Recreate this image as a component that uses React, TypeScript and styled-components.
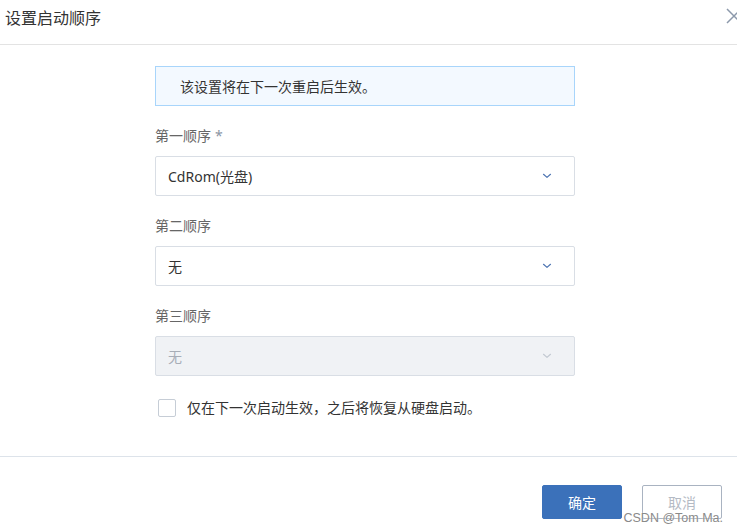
import React from "react";
import styled, { createGlobalStyle } from "styled-components";

const GlobalStyle = createGlobalStyle`
  html, body {
    margin: 0;
    padding: 0;
    background: #ffffff;
    overflow: hidden;
  }
  body {
    font-family: "Noto Sans", "Noto Sans CJK SC", sans-serif;
    color: #333333;
  }
`;

type Option = { label: string; value: string; required?: boolean; disabled?: boolean };

const orders: Option[] = [
  { label: "第一顺序", value: "CdRom(光盘)", required: true },
  { label: "第二顺序", value: "无" },
  { label: "第三顺序", value: "无", disabled: true },
];

const Chevron: React.FC<{ disabled?: boolean }> = ({ disabled }) => (
  <svg width="10" height="6" viewBox="0 0 10 6" fill="none">
    <path
      d="M1.5 1.3 L5 4.4 L8.5 1.3"
      stroke={disabled ? "#c3c9d2" : "#4d74b2"}
      strokeWidth="1.2"
      strokeLinecap="round"
      strokeLinejoin="round"
    />
  </svg>
);

export default function App() {
  return (
    <>
      <GlobalStyle />
      <Dialog>
        <Header>
          <Title>设置启动顺序</Title>
          <CloseIcon width="11" height="16" viewBox="0 0 11 16" fill="none">
            <path d="M1 1 L15 15 M1 15 L15 1" stroke="#8c99ab" strokeWidth="1.5" />
          </CloseIcon>
        </Header>

        <Body>
          <Form>
            <Notice>该设置将在下一次重启后生效。</Notice>

            {orders.map((o) => (
              <Field key={o.label}>
                <Label>
                  {o.label}
                  {o.required && <Star>*</Star>}
                </Label>
                <Select disabled={o.disabled}>
                  <SelectValue disabled={o.disabled}>{o.value}</SelectValue>
                  <Chevron disabled={o.disabled} />
                </Select>
              </Field>
            ))}

            <CheckRow>
              <CheckBox />
              <CheckText>仅在下一次启动生效，之后将恢复从硬盘启动。</CheckText>
            </CheckRow>
          </Form>
        </Body>

        <Footer>
          <Button primary>确定</Button>
          <Button>取消</Button>
        </Footer>

        <Watermark>CSDN @Tom Ma.</Watermark>
      </Dialog>
    </>
  );
}

const Dialog = styled.div`
  position: relative;
  width: 737px;
  height: 532px;
  background: #ffffff;
`;

const Header = styled.div`
  height: 44px;
  border-bottom: 1px solid #e3e3e3;
  display: flex;
  align-items: center;
  justify-content: space-between;
  padding-left: 5px;
  box-sizing: content-box;
`;

const Title = styled.h2`
  margin: 0 0 8px;
  font-size: 16px;
  font-weight: 400;
  color: #333333;
  line-height: 20px;
`;

const CloseIcon = styled.svg`
  align-self: flex-start;
  margin-top: 8px;
`;

const Body = styled.div`
  padding: 21px 0 39px 155px;
`;

const Form = styled.div`
  width: 420px;
  display: flex;
  flex-direction: column;
`;

const Notice = styled.div`
  height: 40px;
  box-sizing: border-box;
  border: 1px solid #a8d5fb;
  background: #f3f9ff;
  padding-left: 24px;
  display: flex;
  align-items: center;
  font-size: 14px;
  color: #333333;
`;

const Field = styled.div`
  display: flex;
  flex-direction: column;
`;

const Label = styled.div`
  margin: 20px 0 10px;
  line-height: 20px;
  font-size: 14px;
  color: #666666;
`;

const Star = styled.span`
  margin-left: 4px;
  color: #8a94a3;
`;

const Select = styled.div<{ disabled?: boolean }>`
  height: 40px;
  box-sizing: border-box;
  border: 1px solid #d9dee5;
  border-radius: 2px;
  background: ${({ disabled }) => (disabled ? "#f0f2f5" : "#ffffff")};
  display: flex;
  align-items: center;
  justify-content: space-between;
  padding: 0 22px 0 12px;
`;

const SelectValue = styled.span<{ disabled?: boolean }>`
  font-size: 14px;
  color: ${({ disabled }) => (disabled ? "#a7adb7" : "#333333")};
`;

const CheckRow = styled.div`
  display: flex;
  align-items: center;
  margin-top: 23px;
  padding-left: 3px;
  gap: 11px;
`;

const CheckBox = styled.span`
  width: 18px;
  height: 18px;
  box-sizing: border-box;
  border: 1px solid #c6cdd6;
  border-radius: 2px;
  background: #ffffff;
`;

const CheckText = styled.span`
  font-size: 14px;
  color: #333333;
  line-height: 18px;
`;

const Footer = styled.div`
  border-top: 1px solid #dde3ea;
  display: flex;
  justify-content: flex-end;
  gap: 20px;
  padding: 28px 15px 0 0;
`;

const Button = styled.button<{ primary?: boolean }>`
  width: 80px;
  height: 34px;
  border-radius: 2px;
  font-family: inherit;
  font-size: 14px;
  cursor: pointer;
  border: 1px solid ${({ primary }) => (primary ? "#3b71ba" : "#a9b3c1")};
  background: ${({ primary }) => (primary ? "#3b71ba" : "#ffffff")};
  color: ${({ primary }) => (primary ? "#ffffff" : "#b4bac4")};
`;

const Watermark = styled.div`
  position: absolute;
  right: 14px;
  bottom: 7px;
  font-family: "Liberation Sans", Arial, sans-serif;
  font-size: 12.5px;
  color: #8a8a8a;
  text-shadow: 0 0 2px #ffffff;
`;
